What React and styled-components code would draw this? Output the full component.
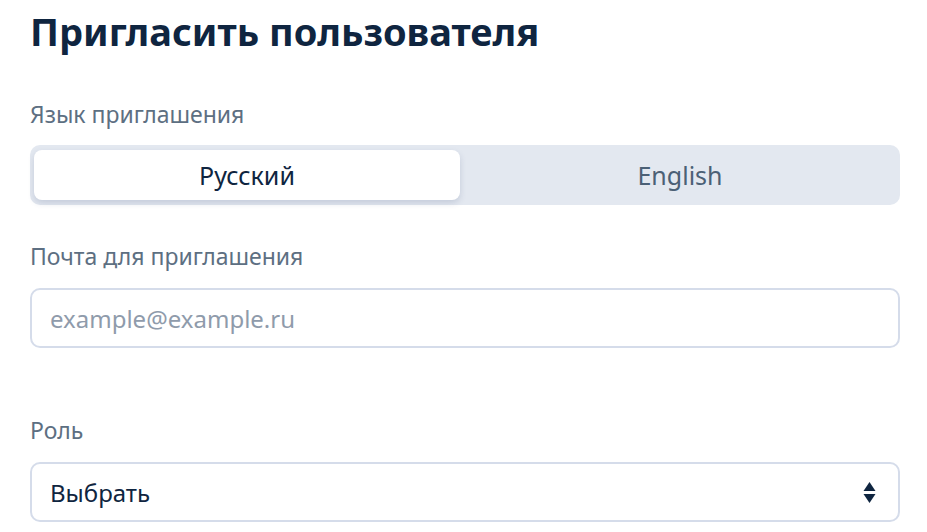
import styled, { createGlobalStyle } from "styled-components";

const GlobalStyle = createGlobalStyle`
    body {
        margin: 0;
        background: #ffffff;
        font-family: "Noto Sans", "Open Sans", sans-serif;
    }
`;

const Container = styled.div`
    padding: 0 27px 0 30px;
    width: 927px;
    box-sizing: border-box;
`;

const Title = styled.h1`
    margin: 0;
    padding-top: 7px;
    font-size: 38px;
    line-height: 48px;
    font-weight: 700;
    color: #0f2540;
`;

const Field = styled.div`
    margin-top: ${props => props.top}px;
`;

const Label = styled.div`
    font-size: 23px;
    line-height: 26px;
    color: #5d6f82;
    margin-bottom: ${props => props.gap}px;
`;

const Segmented = styled.div`
    display: flex;
    height: 60px;
    padding: 5px 0 5px 4px;
    box-sizing: border-box;
    background: #e3e8f0;
    border-radius: 10px;
`;

const Segment = styled.button`
    width: ${props => props.active ? "426px" : "auto"};
    flex: ${props => props.active ? "none" : "1"};
    border: none;
    border-radius: 8px;
    background: ${props => props.active ? "#ffffff" : "transparent"};
    box-shadow: ${props => props.active ? "0 3px 6px rgba(60, 80, 120, 0.18)" : "none"};
    font-family: inherit;
    font-size: 25px;
    padding: 0;
    color: ${props => props.active ? "#0f2540" : "#4b6076"};
    cursor: pointer;
`;

const Input = styled.input`
    display: block;
    width: 100%;
    height: 60px;
    box-sizing: border-box;
    border: 2px solid #d5dcea;
    border-radius: 10px;
    padding: 0 18px;
    font-family: inherit;
    font-size: 24px;
    color: #0f2540;
    outline: none;

    &::placeholder {
        color: #8f9bab;
    }
`;

const Select = styled.div`
    display: flex;
    align-items: center;
    justify-content: space-between;
    height: 60px;
    box-sizing: border-box;
    border: 2px solid #d5dcea;
    border-radius: 10px;
    padding: 0 22px 0 18px;
    font-size: 24px;
    color: #0f2540;
`;

const Arrows = () => (
    <svg width="13" height="23" viewBox="0 0 13 23">
        <path d="M6.5 1 L12.5 10 H0.5 Z" fill="#0f2540" />
        <path d="M6.5 22 L12.5 13 H0.5 Z" fill="#0f2540" />
    </svg>
);

const App = () => {
    return (
        <Container>
            <GlobalStyle />
            <Title>Пригласить пользователя</Title>

            <Field top={46}>
                <Label gap={18}>Язык приглашения</Label>
                <Segmented>
                    <Segment active>Русский</Segment>
                    <Segment>English</Segment>
                </Segmented>
            </Field>

            <Field top={38}>
                <Label gap={19}>Почта для приглашения</Label>
                <Input placeholder="example@example.ru" />
            </Field>

            <Field top={69}>
                <Label gap={19}>Роль</Label>
                <Select>
                    <span>Выбрать</span>
                    <Arrows />
                </Select>
            </Field>
        </Container>
    );
};

export default App;
